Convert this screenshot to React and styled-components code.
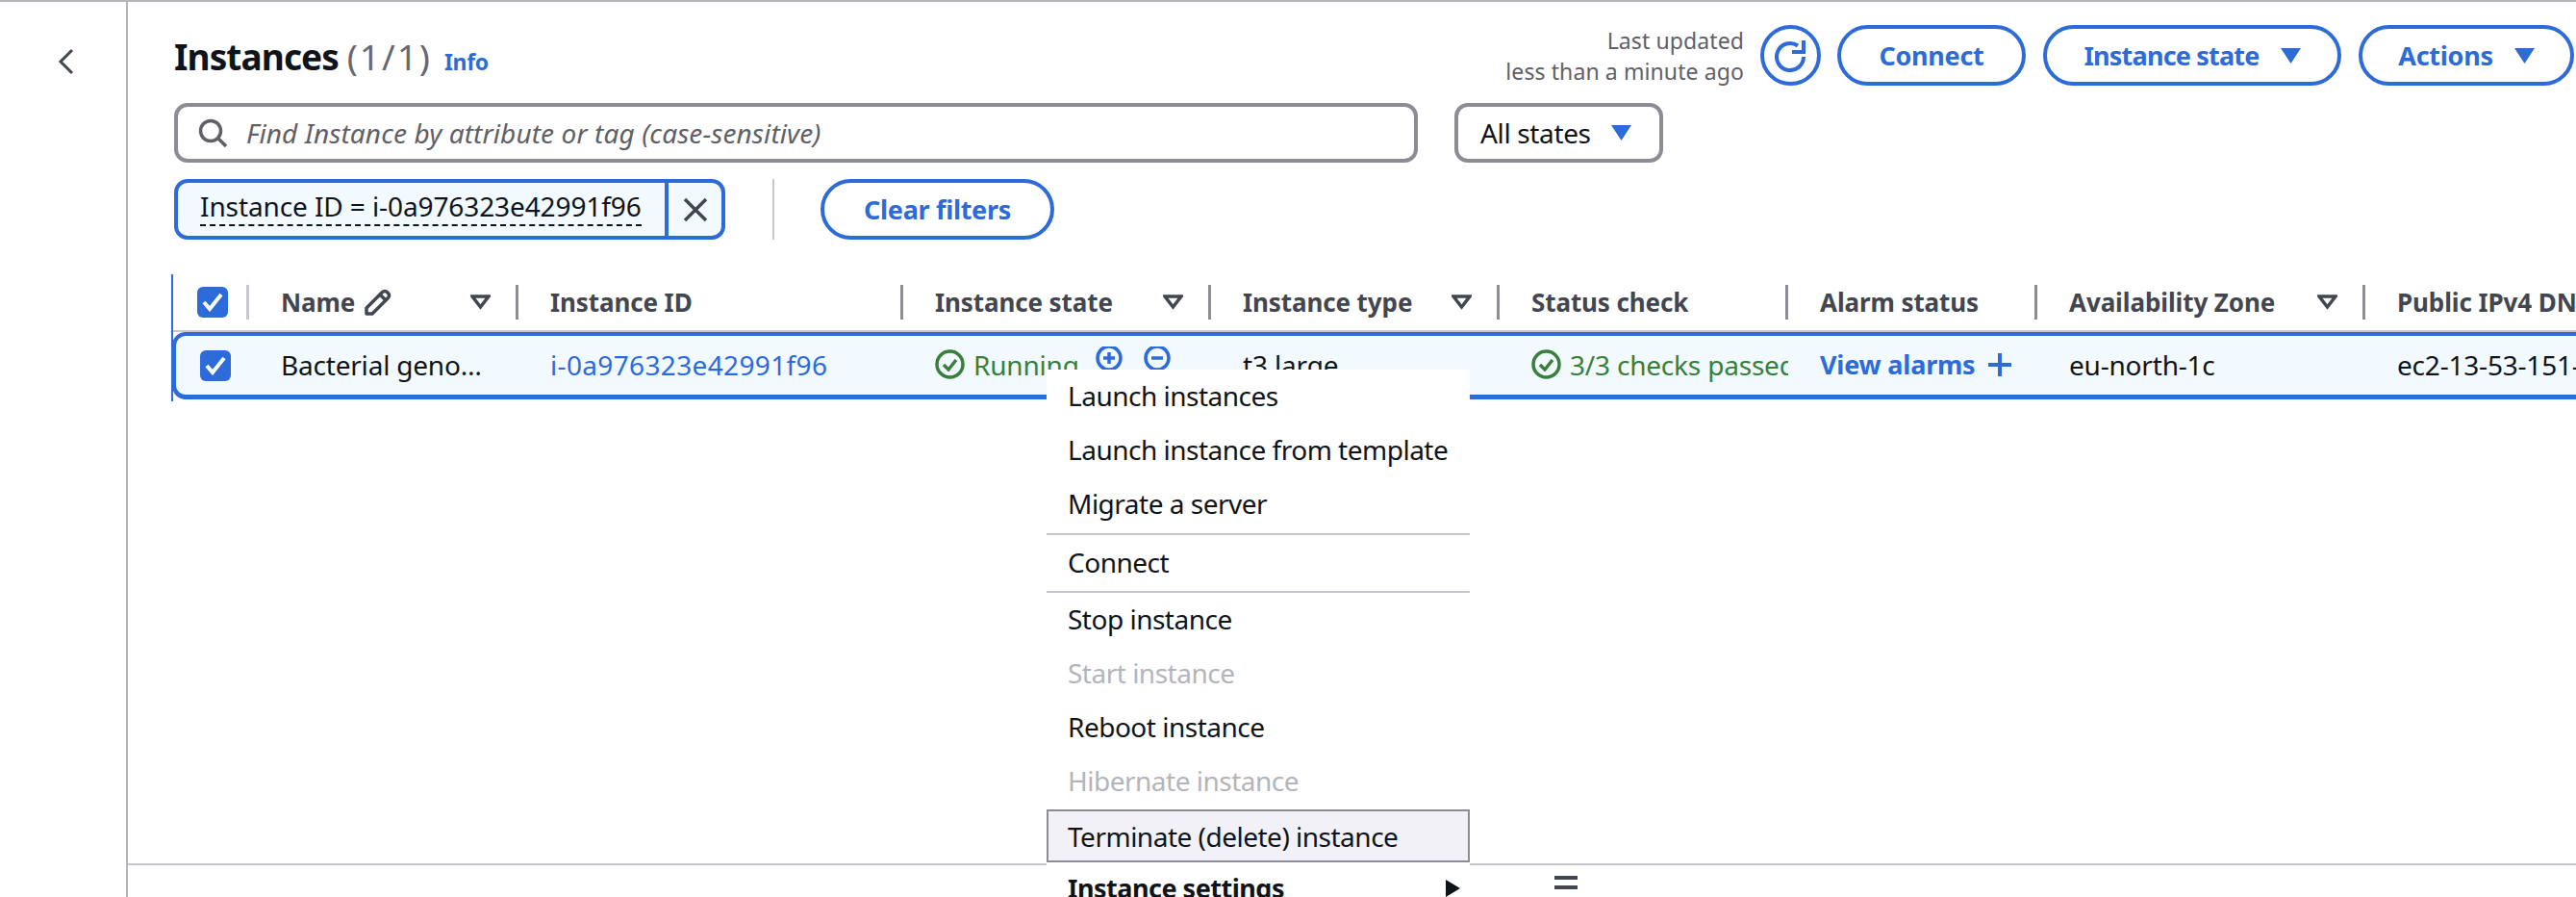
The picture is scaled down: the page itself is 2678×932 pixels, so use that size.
import React from 'react'
import styled, { createGlobalStyle } from 'styled-components'

const BLUE = '#2c6bd9'
const INK = '#0f141a'
const HEAD = '#424650'
const GREEN = '#37803a'
const LINE = '#8c8c94'
const FONT = '"Noto Sans", "Open Sans", "Liberation Sans", sans-serif'

const GlobalStyle = createGlobalStyle`
  html, body { margin: 0; padding: 0; background: #fff; overflow: hidden; }
  * { box-sizing: border-box; }
  body { font-family: ${FONT}; font-size: 28px; letter-spacing: -0.35px; color: ${INK}; }
`

const Page = styled.div`
  position: relative;
  display: flex;
  width: 2678px;
  height: 932px;
  border-top: 2px solid #b4b4bb;
  overflow: hidden;
`

const Rail = styled.div`
  flex: 0 0 133px;
  border-right: 2px solid #b4b4bb;
  padding: 46px 0 0 60px;
`

const Main = styled.div`
  flex: 1;
  min-width: 0;
  display: flex;
  flex-direction: column;
`

const Content = styled.div`
  flex: 0 0 895px;
  padding: 24px 2px 0 48px;
  overflow: hidden;
`

const TitleRow = styled.div`
  display: flex;
  justify-content: space-between;
  height: 63px;
`

const Heading = styled.div`
  display: flex;
  align-items: baseline;
  gap: 13px;
  padding-top: 8px;
`

const Title = styled.h1`
  margin: 0;
  font-size: 37px;
  line-height: 50px;
  font-weight: 700;
  letter-spacing: -0.9px;
  color: ${INK};
`

const Count = styled.span`
  font-weight: 400;
  letter-spacing: 2px;
  color: #656871;
`

const InfoLink = styled.a`
  font-size: 23px;
  font-weight: 700;
  letter-spacing: -0.3px;
  color: ${BLUE};
`

const Actions = styled.div`
  display: flex;
  align-items: center;
  gap: 18px;
`

const Updated = styled.div`
  text-align: right;
  font-size: 23px;
  line-height: 32px;
  letter-spacing: 0.1px;
  color: #5f6066;
`

const Pill = styled.button`
  display: flex;
  align-items: center;
  justify-content: center;
  gap: 22px;
  width: ${p => p.$w}px;
  height: 63px;
  padding: 0;
  border: 4px solid ${BLUE};
  border-radius: 32px;
  background: #fff;
  color: ${BLUE};
  font: 700 27px ${FONT};
  letter-spacing: ${p => p.$spacing ?? -0.3}px;
`

const RoundButton = styled(Pill)`
  margin-left: -1px;
  margin-right: -1px;
`

const FilterRow = styled.div`
  display: flex;
  gap: 38px;
  margin-top: 18px;
`

const Search = styled.div`
  display: flex;
  align-items: center;
  gap: 20px;
  width: 1293px;
  height: 62px;
  padding-left: 21px;
  border: 4px solid ${LINE};
  border-radius: 14px;
`

const Placeholder = styled.span`
  font-style: italic;
  letter-spacing: 0.1px;
  color: #5f6066;
`

const Select = styled.div`
  display: flex;
  align-items: center;
  gap: 21px;
  width: 217px;
  height: 62px;
  padding-left: 23px;
  border: 4px solid ${LINE};
  border-radius: 14px;
`

const TokenRow = styled.div`
  display: flex;
  align-items: stretch;
  height: 63px;
  margin-top: 17px;
`

const Token = styled.div`
  display: flex;
  width: 573px;
  border: 4px solid ${BLUE};
  border-radius: 14px;
  background: #f2f9ff;
`

const TokenLabel = styled.div`
  flex: 0 0 510px;
  padding: 5px 0 0 23px;
  border-right: 4px solid ${BLUE};
  letter-spacing: -0.1px;
  white-space: nowrap;
`

const TokenText = styled.span`
  border-bottom: 2px dashed ${INK};
`

const TokenClose = styled.div`
  flex: 1;
  display: flex;
  align-items: center;
  justify-content: center;
`

const Divider = styled.div`
  width: 2px;
  margin: 0 48px 0 49px;
  background: #c6c6cd;
`

const ClearButton = styled(Pill)``

const Table = styled.div`
  width: 2900px;
  margin: 36px 0 0 -3px;
  border-left: 2px solid ${BLUE};
  height: 132px;
`

const COLUMNS = '76px 280px 400px 320px 300px 300px 259px 341px 420px'

const HeadRow = styled.div`
  display: grid;
  grid-template-columns: ${COLUMNS};
  align-items: center;
  height: 60px;
  border-bottom: 2px solid #c6c6cd;
`

const HeadCell = styled.div`
  display: flex;
  align-items: center;
  height: 36px;
  padding-left: 33px;
  border-left: 3px solid ${p => (p.$light ? '#c6c6cd' : LINE)};
  font-weight: 700;
  font-size: 26px;
  letter-spacing: -0.1px;
  color: ${HEAD};
  white-space: nowrap;
`

const SortCaret = styled.svg`
  margin-left: auto;
  margin-right: 26px;
  flex: none;
`

const PencilIcon = styled.svg`
  margin-left: 10px;
  flex: none;
`

const CheckCell = styled.div`
  padding-left: 25px;
  display: flex;
  align-items: center;
`

const CheckBox = styled.div`
  display: flex;
  align-items: center;
  justify-content: center;
  width: 32px;
  height: 32px;
  border-radius: 6px;
  background: ${BLUE};
`

const DataRow = styled.div`
  display: grid;
  grid-template-columns: ${COLUMNS};
  align-items: center;
  height: 70px;
  margin-left: -1px;
  border: 4px solid ${BLUE};
  border-bottom-width: 5px;
  border-radius: 14px 0 0 14px;
  background: #f2f9ff;
`

const Cell = styled.div`
  display: flex;
  align-items: center;
  gap: ${p => p.$gap || 9}px;
  padding-left: 33px;
  padding-bottom: 2px;
  overflow: hidden;
  white-space: nowrap;
  letter-spacing: ${p => p.$spacing ?? -0.2}px;
  color: ${p => p.$color || INK};

  svg {
    flex: none;
  }
`

const LinkText = styled.span`
  color: ${BLUE};
  font-weight: ${p => (p.$bold ? 700 : 400)};
  font-size: ${p => (p.$bold ? 27 : 28)}px;
`

const RoundIcons = styled.span`
  display: flex;
  gap: 22px;
  margin: -14px 0 0 8px;
`

const BottomBar = styled.div`
  flex: 1;
  border-top: 2px solid #c6c6cd;
`

const Handle = styled.div`
  position: absolute;
  left: 1616px;
  top: 908px;
  width: 24px;
  height: 14px;
  border-top: 4px solid ${HEAD};
  border-bottom: 4px solid ${HEAD};
`

const Menu = styled.div`
  position: absolute;
  left: 1088px;
  top: 382px;
  width: 440px;
  background: #fff;
  letter-spacing: -0.5px;
`

const MenuItem = styled.div`
  display: flex;
  align-items: center;
  justify-content: space-between;
  height: ${p => p.$h || 56}px;
  padding: 0 10px 3px 22px;
  white-space: nowrap;
  color: ${p => (p.$disabled ? '#b4b4bb' : INK)};
`

const ActiveItem = styled(MenuItem)`
  height: 55px;
  margin-top: 1px;
  padding: 0 10px 0 20px;
  background: #f1f1f7;
  border: 2px solid ${LINE};
`

const SubmenuItem = styled(MenuItem)`
  font-size: 27px;
  font-weight: 700;
  letter-spacing: -0.5px;
`

const MenuRule = styled.div`
  height: 2px;
  margin-top: ${p => p.$gap || 0}px;
  background: #c6c6cd;
`

function Chevron() {
  return (
    <svg width="18" height="28" viewBox="0 0 18 28" fill="none">
      <path d="M15 2 3 14l12 12" stroke={HEAD} strokeWidth="3" />
    </svg>
  )
}

function RefreshIcon() {
  return (
    <svg width="34" height="34" viewBox="0 0 34 34" fill="none" stroke={BLUE} strokeWidth="4">
      <path d="M24 6.500A14 14 0 1 0 30 18" />
      <path d="M30 1v12H18" />
    </svg>
  )
}

function Caret({ color = BLUE, w = 21, h = 16 }) {
  return (
    <svg width={w} height={h} viewBox="0 0 21 16">
      <path d="M0 0h21L10.5 16z" fill={color} />
    </svg>
  )
}

function SearchIcon() {
  return (
    <svg width="30" height="30" viewBox="0 0 30 30" fill="none" stroke="#5f6066" strokeWidth="3.5">
      <circle cx="13" cy="13" r="10.5" />
      <path d="m21 21 8 8" />
    </svg>
  )
}

function CloseIcon() {
  return (
    <svg width="26" height="26" viewBox="0 0 26 26" fill="none" stroke={HEAD} strokeWidth="3.5">
      <path d="m2 2 22 22M24 2 2 24" />
    </svg>
  )
}

function Tick() {
  return (
    <svg width="22" height="20" viewBox="0 0 22 20" fill="none" stroke="#fff" strokeWidth="4">
      <path d="m2 10 6 7L20 2" />
    </svg>
  )
}

function Pencil() {
  return (
    <PencilIcon width="28" height="28" viewBox="0 0 28 28" fill="none" stroke={HEAD} strokeWidth="3.5" strokeLinejoin="round">
      <path d="M2 26v-6L18 4c2-2 4-2 6 0s2 4 0 6L8 26z" />
      <path d="m16 6 6 6" />
    </PencilIcon>
  )
}

function SortIcon() {
  return (
    <SortCaret width="21" height="16" viewBox="0 0 21 16" fill="none" stroke={HEAD} strokeWidth="3.5">
      <path d="M2 2h17l-8.500 11z" />
    </SortCaret>
  )
}

function StatusCheck() {
  return (
    <svg width="31" height="31" viewBox="0 0 31 31" fill="none" stroke={GREEN} strokeWidth="3.5">
      <circle cx="15.500" cy="15.500" r="13.500" />
      <path d="m9 16 5 5 8-10" />
    </svg>
  )
}

function CircleSign({ plus }) {
  return (
    <svg width="28" height="28" viewBox="0 0 28 28" fill="none" stroke={BLUE} strokeWidth="3.500">
      <circle cx="14" cy="14" r="12" />
      <path d={plus ? 'M8 14h12M14 8v12' : 'M8 14h12'} />
    </svg>
  )
}

function PlusIcon() {
  return (
    <svg width="24" height="24" viewBox="0 0 24 24" fill="none" stroke={BLUE} strokeWidth="4">
      <path d="M0 12h24M12 0v24" />
    </svg>
  )
}

const MENU_TOP = [
  { label: 'Launch instances' },
  { label: 'Launch instance from template' },
  { label: 'Migrate a server' },
]

const MENU_BOTTOM = [
  { label: 'Stop instance' },
  { label: 'Start instance', disabled: true },
  { label: 'Reboot instance' },
  { label: 'Hibernate instance', disabled: true },
]

export default function App() {
  return (
    <>
      <GlobalStyle />
      <Page>
        <Rail>
          <Chevron />
        </Rail>
        <Main>
          <Content>
            <TitleRow>
              <Heading>
                <Title>
                  Instances <Count>(1/1)</Count>
                </Title>
                <InfoLink>Info</InfoLink>
              </Heading>
              <Actions>
                <Updated>
                  Last updated
                  <br />
                  less than a minute ago
                </Updated>
                <RoundButton $w={63}>
                  <RefreshIcon />
                </RoundButton>
                <Pill $w={196}>Connect</Pill>
                <Pill $w={310} $spacing={-0.8}>
                  Instance state <Caret />
                </Pill>
                <Pill $w={224}>
                  Actions <Caret />
                </Pill>
              </Actions>
            </TitleRow>
            <FilterRow>
              <Search>
                <SearchIcon />
                <Placeholder>Find Instance by attribute or tag (case-sensitive)</Placeholder>
              </Search>
              <Select>
                All states <Caret />
              </Select>
            </FilterRow>
            <TokenRow>
              <Token>
                <TokenLabel>
                  <TokenText>Instance ID = i-0a976323e42991f96</TokenText>
                </TokenLabel>
                <TokenClose>
                  <CloseIcon />
                </TokenClose>
              </Token>
              <Divider />
              <ClearButton $w={243}>Clear filters</ClearButton>
            </TokenRow>
            <Table>
              <HeadRow>
                <CheckCell>
                  <CheckBox>
                    <Tick />
                  </CheckBox>
                </CheckCell>
                <HeadCell $light>
                  Name
                  <Pencil />
                  <SortIcon />
                </HeadCell>
                <HeadCell>Instance ID</HeadCell>
                <HeadCell>
                  Instance state
                  <SortIcon />
                </HeadCell>
                <HeadCell>
                  Instance type
                  <SortIcon />
                </HeadCell>
                <HeadCell>Status check</HeadCell>
                <HeadCell>Alarm status</HeadCell>
                <HeadCell>
                  Availability Zone
                  <SortIcon />
                </HeadCell>
                <HeadCell>Public IPv4 DNS</HeadCell>
              </HeadRow>
              <DataRow>
                <CheckCell>
                  <CheckBox>
                    <Tick />
                  </CheckBox>
                </CheckCell>
                <Cell>Bacterial geno…</Cell>
                <Cell $spacing={0.35}>
                  <LinkText>i-0a976323e42991f96</LinkText>
                </Cell>
                <Cell $color={GREEN}>
                  <StatusCheck />
                  Running
                  <RoundIcons>
                    <CircleSign plus />
                    <CircleSign />
                  </RoundIcons>
                </Cell>
                <Cell>t3.large</Cell>
                <Cell $color={GREEN}>
                  <StatusCheck />
                  3/3 checks passed
                </Cell>
                <Cell $gap={14}>
                  <LinkText $bold>View alarms</LinkText>
                  <PlusIcon />
                </Cell>
                <Cell>eu-north-1c</Cell>
                <Cell>ec2-13-53-151-12.eu-north-1</Cell>
              </DataRow>
            </Table>
          </Content>
          <BottomBar />
        </Main>
        <Menu>
          {MENU_TOP.map(item => (
            <MenuItem key={item.label}>{item.label}</MenuItem>
          ))}
          <MenuRule $gap={2} />
          <MenuItem $h={58}>Connect</MenuItem>
          <MenuRule />
          {MENU_BOTTOM.map(item => (
            <MenuItem key={item.label} $disabled={item.disabled}>
              {item.label}
            </MenuItem>
          ))}
          <ActiveItem>Terminate (delete) instance</ActiveItem>
          <SubmenuItem>
            Instance settings
            <svg width="15" height="18" viewBox="0 0 15 18">
              <path d="M0 0l15 9-15 9z" fill={INK} />
            </svg>
          </SubmenuItem>
        </Menu>
        <Handle />
      </Page>
    </>
  )
}
